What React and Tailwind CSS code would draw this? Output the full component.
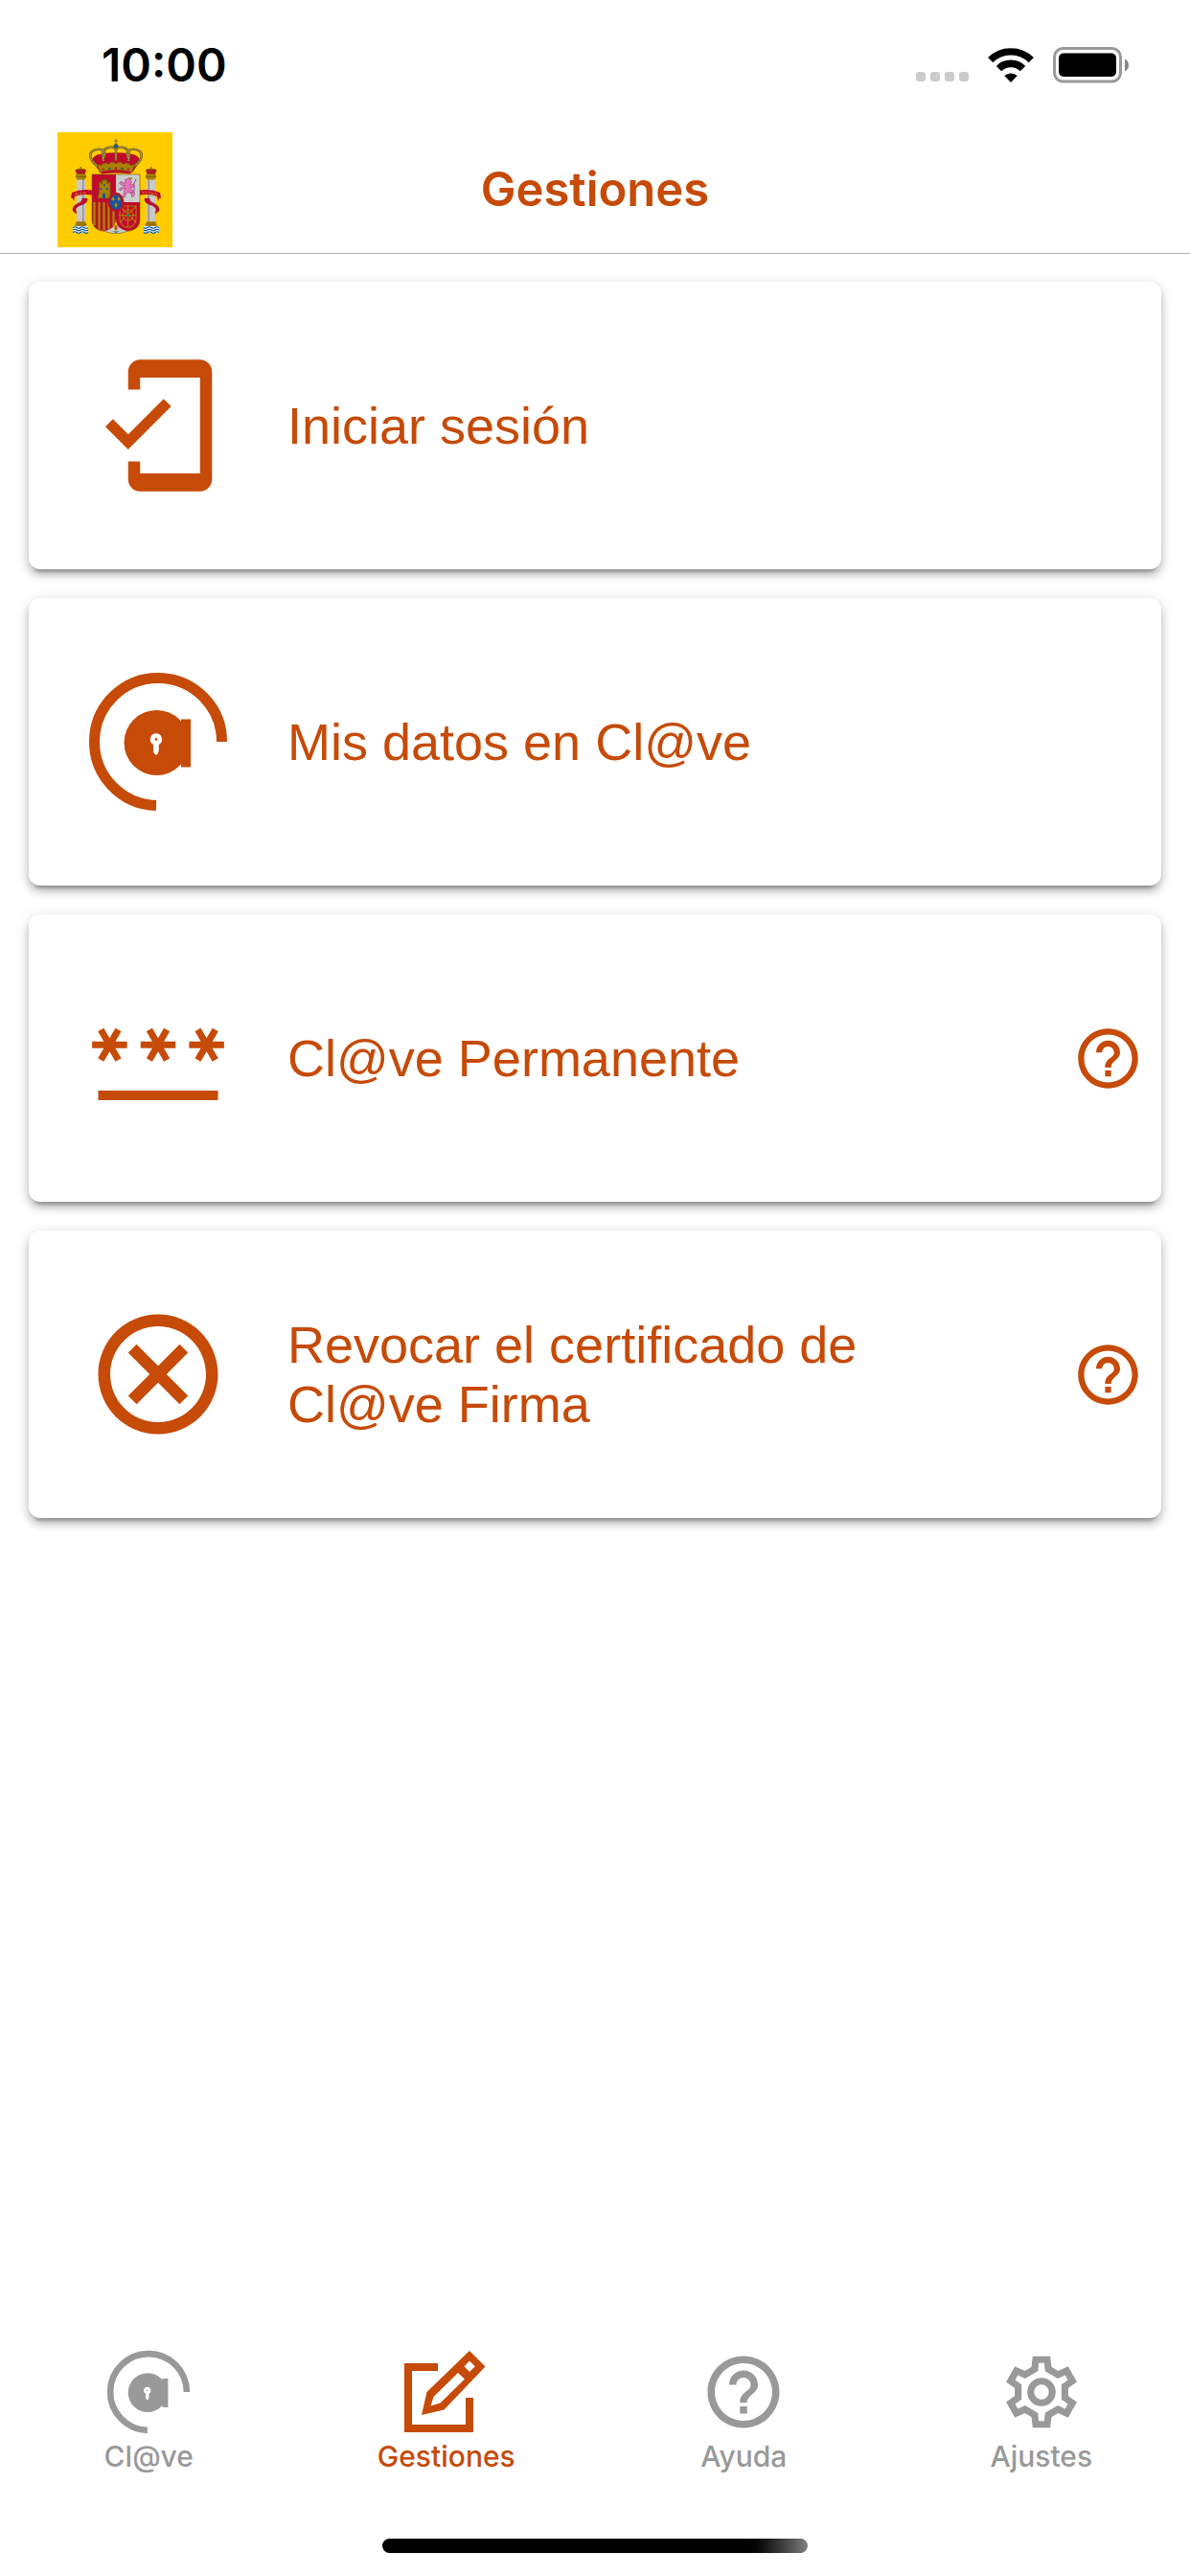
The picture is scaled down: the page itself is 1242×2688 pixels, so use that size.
import React, { useState } from "react";
import { MdHelpOutline, MdMobileFriendly, MdOutlineCancel } from "react-icons/md";

function ClaveIcon({ className }) {
  return (
    <svg viewBox="0 0 150 150" className={className} fill="currentColor" aria-hidden="true">
      <path d="M141.5 75A66.5 66.5 0 1 0 73 141.5" fill="none" stroke="currentColor" strokeWidth="11" />
      <circle cx="73.5" cy="76" r="34" />
      <rect x="99" y="51.5" width="10" height="50" />
      <path fill="#fff" d="M73 66.2a6.3 6.3 0 0 0-3 11.8v8l1.6 1.4.4 1.3 2.4-.4.8-2.7.6-1.6V78A6.3 6.3 0 0 0 73 66.2z" />
      <circle cx="73" cy="72.4" r="1.3" />
    </svg>
  );
}

function PasswordIcon({ className }) {
  return (
    <svg viewBox="0 0 24 24" className={className} stroke="currentColor" fill="none" aria-hidden="true">
      {[3.9, 12, 20.1].map((x) => (
        <path
          key={x}
          strokeWidth="1.12"
          d={`M${x - 2.92} 9.8h5.84M${x - 1.46} 7.27l2.92 5.06M${x + 1.46} 7.27l-2.92 5.06`}
        />
      ))}
      <path strokeWidth="1.6" d="M2 18.24h20" />
    </svg>
  );
}

function EditIcon({ className }) {
  return (
    <svg viewBox="0 0 90 90" className={className} fill="currentColor" aria-hidden="true">
      <path d="M36 19H5v64h64V51" fill="none" stroke="currentColor" strokeWidth="8" />
      <path
        fillRule="evenodd"
        d="M69 2l16.500 16.500L42.500 63.500 19 69l5.500-24zM69 12.500l-5.500 5.800 5.500 5.800 5.800-5.800zM57 25L31.500 50 28.500 59.500 38.500 56.500 64 31.500z"
      />
    </svg>
  );
}

function GearIcon({ className }) {
  return (
    <svg viewBox="-12 -12 24 24" className={className} fill="none" stroke="currentColor" strokeWidth="1.9" aria-hidden="true">
      <path d="M-1.600-9L1.600-9 1.900-6.400 4.600-4.800 7-5.900 8.600-3.100 6.500-1.600 6.500 1.600 8.600 3.100 7 5.900 4.600 4.800 1.900 6.400 1.600 9-1.600 9-1.900 6.400-4.600 4.800-7 5.900-8.600 3.100-6.500 1.600-6.500-1.600-8.600-3.100-7-5.900-4.600-4.800-1.900-6.400z" />
      <circle r="3" />
    </svg>
  );
}

function Pillar() {
  return (
    <g>
      <path d="M20 49h9v45h-9z" fill="#c9c9c9" />
      <path d="M26 49h1.500v45H26z" fill="#8f8f98" />
      <path d="M19 44h11v3l-1.500 2.500h-8L19 47zM19.500 93h9.500l1.500 5h-12z" fill="#a68100" />
      <path d="M19 46.500h11M18.500 96h12" stroke="#6d5600" strokeWidth=".6" />
      <path d="M18.500 39.500q2-1.500 5.800-1.300 3.700-.2 5.700 1.300L28.500 43.500h-8.500z" fill="#b5122a" />
      <path d="M18.500 39.800q3-2 5.800-.3 3-1.700 5.700.3M20 43.500h8.500M24.300 36v4M23.200 37h2.200" stroke="#7d5f00" strokeWidth=".9" fill="none" />
      <path d="M16 98h16v7H16z" fill="#e8eef2" />
      <path d="M16 99.500q2-1.500 4 0t4 0 4 0 4 0M16 102q2-1.500 4 0t4 0 4 0 4 0M16 104.500q2-1.500 4 0t4 0 4 0 4 0" stroke="#0b5a9c" strokeWidth="1.100" fill="none" />
      <path d="M15 63q9-4 21-2.500l1 1v4q-12-1.500-19 1.500l-1 5-1-3-2-.5z" fill="#c0092d" />
      <path d="M31 69q1 4-5 6.500-7 2-7 5.500l1 4-4-3q-.8-5 5-7.500 5-2 5-5.500z" fill="#c0092d" stroke="#7c1020" strokeWidth=".4" />
    </g>
  );
}

function CoatOfArms({ className }) {
  return (
    <svg viewBox="0 0 120 120" className={className} role="img" aria-label="Escudo de España">
      <path fill="#ffcc00" d="M0 0h120v120H0z" />
      <Pillar />
      <g transform="translate(122 0) scale(-1 1)">
        <Pillar />
      </g>
      <text x="18" y="66.500" fontSize="5" fontFamily="Liberation Serif, serif" fill="#d9a400" transform="rotate(-6 18 66)">PLVS</text>
      <text x="88" y="64.500" fontSize="5" fontFamily="Liberation Serif, serif" fill="#d9a400" transform="rotate(6 88 64)">VLTRA</text>

      {/* crown */}
      <path d="M36 30q0-6 10-7.500Q61 20 76 22.500 86 24 86 30l-7 11H44z" fill="#c00a2c" />
      <g fill="none" stroke="#77651d" strokeWidth="2.600">
        <path d="M43 36C35 31 32 24 36 20q5-4 12-1 3 2 0 8M79 36c8-5 11-12 7-16q-5-4-12-1-3 2 0 8M48 30q-3-12 5-14 6-1.500 8 2v12M74 30q3-12-5-14-6-1.500-8 2" />
      </g>
      <g fill="none" stroke="#d6c06a" strokeWidth="1" strokeDasharray="1.200 .8">
        <path d="M43 36C35 31 32 24 36 20q5-4 12-1 3 2 0 8M79 36c8-5 11-12 7-16q-5-4-12-1-3 2 0 8M48 30q-3-12 5-14 6-1.500 8 2v12M74 30q3-12-5-14-6-1.500-8 2" />
      </g>
      <path d="M42 34q19-6 38 0l-2 8q-17-3-34 0z" fill="#a68100" stroke="#6d4b10" strokeWidth=".6" />
      <path d="M45 41q16-4 32 0l-1 2.600q-15-2-30 0z" fill="#b5122a" />
      <g fill="#c00a2c">
        <circle cx="45" cy="33" r="1.800" />
        <circle cx="53" cy="31.500" r="1.800" />
        <circle cx="61" cy="31" r="1.800" />
        <circle cx="69" cy="31.500" r="1.800" />
        <circle cx="77" cy="33" r="1.800" />
        <circle cx="48" cy="38.500" r="1" />
        <circle cx="61" cy="37.500" r="1.200" />
        <circle cx="74" cy="38.500" r="1" />
      </g>
      <path d="M53 38l3-.3M66 37.700l3 .3" stroke="#147a4d" strokeWidth="1.400" />
      <circle cx="61" cy="14.500" r="2.200" fill="#1b5b96" stroke="#6d5600" strokeWidth=".8" />
      <path d="M61 7v6M59 9.300h4" stroke="#8b6d00" strokeWidth="1.100" />

      {/* shield */}
      <path d="M36 44h25v29H36z" fill="#c00a2c" />
      <path d="M61 44h25v29H61z" fill="#cccccc" />
      <path d="M49 98h24l-1 5.500q-11 4.500-22 0z" fill="#cccccc" />
      <path d="M36 73h25v17q0 8-6 11-8 4-14.500-.5Q36 97 36 91z" fill="#b5122a" />
      <path d="M38.500 73v24M43.500 73v28.500M48.500 73v29.500M53.500 73v28M58.500 73v25" stroke="#ad8600" strokeWidth="2.200" />
      <path d="M61 73h25v18q0 6-4.500 9.500-7 4.500-14.500.5-6-3-6-11z" fill="#c00a2c" />
      <g fill="none" stroke="#b58a00" strokeWidth="1.200" strokeDasharray="1.600 .5">
        <path d="M65 77h17v14q-1 7-8.500 8.500Q66 98 65 91zM65 77l17 17M82 77L65 94M73.500 76v23M64 86.500h19" />
        <circle cx="73.500" cy="86.500" r="5.500" />
      </g>
      <circle cx="73.500" cy="86.500" r="1.500" fill="#1f8a4c" />
      {/* castle */}
      <path d="M42 69l1.500-7v-10h2v1.500h1V49h1v1.500h1V49h1.500v1.500h1V49h1v4.500h1V52h2v10l.5 7z" fill="#a68100" stroke="#6d4b10" strokeWidth=".6" />
      <path d="M47 64.500q1.500-2 3 0V69h-3zM44.500 58h1.500v2h-1.500zM51 58h1.500v2H51zM48 54h1.500v2H48z" fill="#17539b" />
      {/* lion */}
      <path d="M70 50l3-1.500 3 .5 1.500 3-2 3 3-1 2 2-1.500 1.500-2-.5v3l2.500 1 1 3-1 3-2 .5v-3l-3-2-3 1-1 4-3 .5 1.500-3 .5-4 2-3-3 1-3 2-1-2 3-1.500 3-2-4-.5-2-2 2-1.500 3 1.500 2-.5z" fill="#e873bd" stroke="#8c4274" strokeWidth=".6" />
      <path d="M75 63q6 1 5-5t2-8l-1-1.500" fill="none" stroke="#a04c86" strokeWidth="1" />
      <path d="M74 48.500l.5-2 1.500 1 1.500-.7.500 2.200z" fill="#a68100" />
      {/* pomegranate */}
      <path d="M55 102q6 3 12 0l-6 3z" fill="#147a4d" />
      <path d="M61 96q3 1.500 2 5l-2 2-2-2q-1-3.500 2-5z" fill="#c99a1a" />
      <path d="M61 98v3.500" stroke="#c00a2c" strokeWidth="1.200" />
      {/* lilies */}
      <ellipse cx="61" cy="73" rx="7.300" ry="9" fill="#17539b" stroke="#b5122a" strokeWidth="2.400" />
      <path d="M58 67.500v4M56.500 69.800h3M64 67.500v4M62.500 69.800h3M61 73.500v5M59.200 76h3.600" stroke="#c9a000" strokeWidth="1.200" />
      <path d="M36 44h50v47q0 6-4.500 9.500-4 3-9.500 3-11 4.500-22 0-5.500 0-9.500-3Q36 97 36 91z" fill="none" stroke="#7a4a1c" strokeWidth=".6" />
    </svg>
  );
}

function StatusBar() {
  return (
    <div className="flex h-[132px] items-center justify-between pt-1 pr-[63px] pl-[106px]">
      <span className="text-[48px] leading-[60px] font-semibold text-black">10:00</span>
      <div className="flex items-center">
        <div className="flex gap-[5px] self-end pb-0.5">
          {[0, 1, 2, 3].map((i) => (
            <span key={i} className="size-[10px] rounded-[3px] bg-[#cbcbcb]" />
          ))}
        </div>
        <svg viewBox="0 0 48 36" className="ml-5 h-9 w-12" fill="none" stroke="#000" aria-hidden="true">
          <path d="M2.700 12.700A30.200 30.200 0 0 1 45.300 12.700" strokeWidth="7.400" />
          <path d="M11.500 21.600A17.600 17.600 0 0 1 36.500 21.600" strokeWidth="7.600" />
          <path d="M24 36l-6.800-6.900a10 10 0 0 1 13.600 0z" fill="#000" stroke="none" />
        </svg>
        <svg viewBox="0 0 80 38" className="ml-5 h-[38px] w-20" aria-hidden="true">
          <rect x="1.500" y="1.500" width="69" height="34.500" rx="9" fill="none" stroke="#999" strokeWidth="3" />
          <rect x="6" y="6.500" width="60" height="24.500" rx="5" />
          <path d="M75 12.500q4 2 4 6.500t-4 6.500z" fill="#858585" />
        </svg>
      </div>
    </div>
  );
}

const actions = [
  { label: "Iniciar sesión", icon: MdMobileFriendly },
  { label: "Mis datos en Cl@ve", icon: ClaveIcon },
  { label: "Cl@ve Permanente", icon: PasswordIcon, help: true },
  { label: "Revocar el certificado de Cl@ve Firma", icon: MdOutlineCancel, help: true },
];

const tabs = [
  { label: "Cl@ve", icon: ClaveIcon },
  { label: "Gestiones", icon: EditIcon },
  { label: "Ayuda", icon: MdHelpOutline },
  { label: "Ajustes", icon: GearIcon },
];

function ActionCard({ label, icon: Icon, help }) {
  return (
    <li className="flex h-[300px] items-center rounded-xl bg-white pr-[18px] shadow-[0_9px_3px_-6px_rgba(0,0,0,0.2),0_6px_8px_0_rgba(0,0,0,0.22),0_3px_15px_0_rgba(0,0,0,0.12)]">
      <button type="button" className="flex h-full flex-1 items-center gap-[60px] pr-[90px] pl-[60px] text-left">
        <Icon className="size-[150px] shrink-0" />
        <span className="font-['Liberation_Sans',Arial,sans-serif] text-[54px] leading-[62px]">{label}</span>
      </button>
      {help && (
        <button type="button" aria-label={`Ayuda: ${label}`}>
          <MdHelpOutline className="size-[75px]" />
        </button>
      )}
    </li>
  );
}

export default function App() {
  const [active, setActive] = useState("Gestiones");

  return (
    <div className="flex min-h-screen flex-col bg-white font-['Inter',sans-serif] text-[#c64a08]">
      <StatusBar />

      <header className="grid h-[133px] grid-cols-[1fr_auto_1fr] items-center border-b border-[#b2b2b2] px-[60px]">
        <CoatOfArms className="size-[120px]" />
        <h1 className="text-[49px] leading-[60px] font-semibold">Gestiones</h1>
      </header>

      <main className="flex-1 px-[30px] pt-[29px]">
        <ul className="flex flex-col gap-[30px]">
          {actions.map((a) => (
            <ActionCard key={a.label} {...a} />
          ))}
        </ul>
      </main>

      <nav className="grid grid-cols-4 pb-[68px]">
        {tabs.map(({ label, icon: Icon }) => (
          <a
            key={label}
            href={`#${label}`}
            onClick={() => setActive(label)}
            className={`flex flex-col items-center gap-1 ${active === label ? "text-[#c64a08]" : "text-[#999999]"}`}
          >
            <Icon className="size-[90px]" />
            <span className="text-[30px] leading-9 font-medium">{label}</span>
          </a>
        ))}
      </nav>

      <div className="mb-6 flex justify-center">
        <div className="h-[15px] w-[444px] rounded-full bg-linear-to-r from-black from-85% to-[#808080]" />
      </div>
    </div>
  );
}
